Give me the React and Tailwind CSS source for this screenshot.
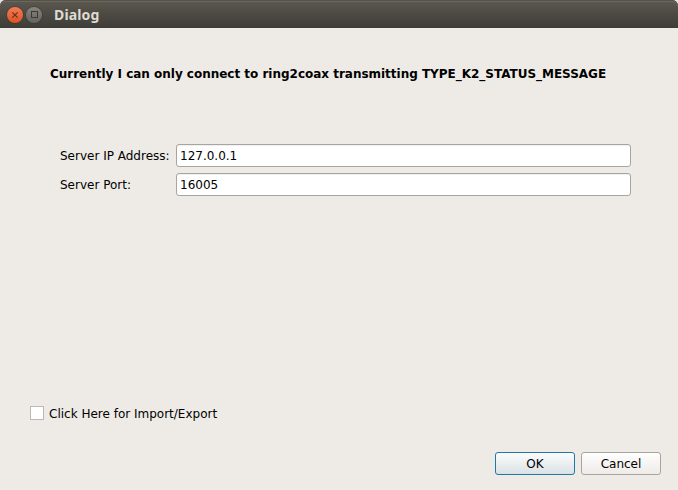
import React from "react";

function Field({ id, label, value }) {
  return (
    <div className="flex h-[23px] items-center">
      <label htmlFor={id} className="w-[116px] shrink-0 whitespace-nowrap pt-0.5">{label}</label>
      <input
        id={id}
        defaultValue={value}
        className="h-[23px] min-w-0 flex-1 rounded-[3px] border border-[#a8a5a1] bg-white px-[3px] shadow-[inset_0_1px_0_#f0f0f0] outline-none"
      />
    </div>
  );
}

function TitleBar() {
  return (
    <header className="flex h-7 items-center rounded-t-[6px] bg-linear-to-b from-[#5d594f] to-[#3d3c37] pl-[7px] pt-px shadow-[inset_0_1px_0_#55524b,inset_0_2px_0_#6a675e]">
      <button aria-label="Close" className="flex size-4 items-center justify-center rounded-full bg-linear-to-b from-[#f47c54] to-[#e0501f] shadow-[0_0_0_1px_#3b393499]">
        <svg width="8" height="8" viewBox="0 0 8 8" fill="none" stroke="#63301e" strokeWidth="1.1">
          <path d="M1.3 1.3 6.7 6.7M6.7 1.3 1.3 6.7" />
        </svg>
      </button>
      <button aria-label="Maximize" className="ml-[3px] flex size-4 items-center justify-center rounded-full bg-linear-to-b from-[#86847c] to-[#65635c] shadow-[0_0_0_1px_#3b393499]">
        <span className="ml-px size-[7px] border border-[#3b3a35]" />
      </button>
      <h1 className="ml-3 font-['Noto_Sans','Open_Sans',sans-serif] text-[14px] font-bold leading-4 tracking-[0.15px] text-[#dfdbd2]">Dialog</h1>
    </header>
  );
}

export default function App() {
  return (
    <div className="h-[490px] w-[678px] bg-[#e4e3e0] font-['DejaVu_Sans',sans-serif] text-[12px] leading-[15px] text-black">
      <TitleBar />
      <main className="flex h-[462px] flex-col bg-[#eeebe7]">
        <p className="mt-[39px] whitespace-nowrap pl-[50px] font-bold tracking-[-0.016px]">
          Currently I can only connect to ring2coax transmitting TYPE_K2_STATUS_MESSAGE
        </p>
        <form className="mt-[62px] flex flex-col gap-1.5 pl-[60px] pr-[47px]">
          <Field id="address" label="Server IP Address:" value="127.0.0.1" />
          <Field id="port" label="Server Port:" value="16005" />
        </form>
        <label className="mt-[210px] flex h-[14px] items-center pl-[30px]">
          <input type="checkbox" className="mr-[5px] size-[14px] appearance-none border border-[#bcb9b5] bg-white" />
          <span className="pt-0.5">Click Here for Import/Export</span>
        </label>
        <footer className="mt-8 flex justify-end gap-1.5 pr-[17px]">
          <button className="h-[23px] w-20 rounded-[3px] border border-[#2277a5] bg-linear-to-b from-[#fbfcfc] to-[#dae2e5] pt-0.5">OK</button>
          <button className="h-[23px] w-20 rounded-[3px] border border-[#a8a5a1] bg-linear-to-b from-[#fefefe] to-[#eeebe8] pt-0.5">Cancel</button>
        </footer>
      </main>
    </div>
  );
}
